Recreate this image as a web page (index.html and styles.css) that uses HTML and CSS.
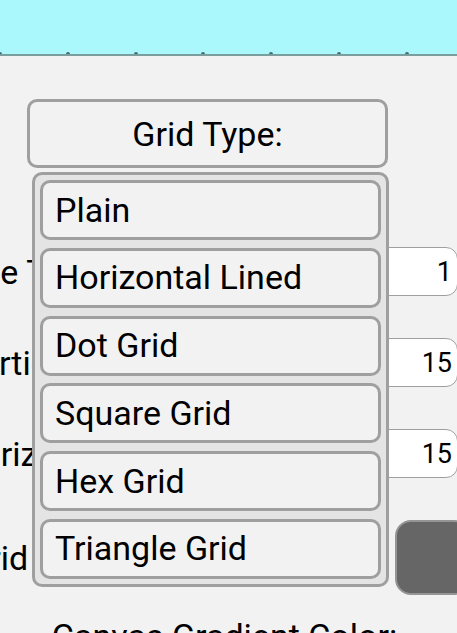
FILE: index.html
```html
<!DOCTYPE html>
<html lang="en">
<head>
<meta charset="utf-8">
<title>Grid Settings</title>
<link rel="stylesheet" href="styles.css">
</head>
<body>
<div class="topbar">
  <div class="ticks">
    <span class="tick"></span><span class="tick"></span><span class="tick"></span><span class="tick"></span><span class="tick"></span><span class="tick"></span><span class="tick"></span>
  </div>
</div>
<main class="main">
  <div class="select-wrap">
    <div class="select-btn">Grid Type:</div>
    <ul class="dropdown">
      <li class="item">Plain</li>
      <li class="item">Horizontal Lined</li>
      <li class="item">Dot Grid</li>
      <li class="item">Square Grid</li>
      <li class="item">Hex Grid</li>
      <li class="item">Triangle Grid</li>
    </ul>
  </div>
  <div class="settings">
    <div class="row">
      <span class="label label-thickness">Line Thickness:</span>
      <span class="input">1</span>
    </div>
    <div class="row">
      <span class="label label-vertical">Vertical Spacing:</span>
      <span class="input">15</span>
    </div>
    <div class="row">
      <span class="label label-horizontal">Horizontal Spacing:</span>
      <span class="input">15</span>
    </div>
    <div class="row row-color">
      <span class="label label-color">Grid Color:</span>
      <span class="swatch"></span>
    </div>
  </div>
  <div class="section-title">Canvas Gradient Color:</div>
</main>
</body>
</html>
```
FILE: styles.css
```css
* { box-sizing: border-box; }
html, body { margin: 0; padding: 0; }
body {
  width: 457px;
  height: 633px;
  overflow: hidden;
  background: #f2f2f2;
  font-family: Roboto, "Noto Sans", sans-serif;
  color: #000;
}
.topbar {
  height: 56px;
  background: #aaf8fc;
  border-bottom: 2px solid #7a9d9e;
  display: flex;
  align-items: flex-end;
}
.ticks {
  display: flex;
  gap: 63.8px;
  margin-left: -2px;
}
.tick {
  width: 4px;
  height: 2px;
  background: #4d6b6c;
  border-radius: 2px 2px 0 0;
  flex: none;
}
.main {
  padding-top: 43px;
}
.select-wrap {
  position: relative;
  margin-left: 27px;
  width: 361px;
}
.select-btn {
  height: 69px;
  border: 3px solid #9f9f9f;
  border-radius: 10px;
  display: flex;
  align-items: center;
  justify-content: center;
  font-size: 34px;
}
.dropdown {
  position: absolute;
  left: 5px;
  top: 73px;
  width: 357px;
  margin: 0;
  padding: 5px;
  list-style: none;
  background: #e4e4e4;
  border: 3px solid #9f9f9f;
  border-radius: 10px;
  display: flex;
  flex-direction: column;
  gap: 7.75px;
  z-index: 2;
}
.item {
  height: 60px;
  border: 3px solid #9f9f9f;
  border-radius: 10px;
  background: #f2f2f2;
  padding-left: 12px;
  padding-bottom: 1px;
  display: flex;
  align-items: center;
  font-size: 34px;
  white-space: nowrap;
}
.settings {
  margin-top: 79px;
  display: flex;
  flex-direction: column;
  gap: 42px;
}
.row {
  display: flex;
  align-items: center;
  height: 49px;
}
.row-color {
  height: 75px;
}
.label {
  flex: 0 0 400px;
  overflow: hidden;
  white-space: nowrap;
  font-size: 34px;
}
.label-thickness { margin-left: -45px; flex-basis: 420px; }
.label-vertical { margin-left: -40px; flex-basis: 415px; }
.label-horizontal { margin-left: -43px; flex-basis: 418px; }
.label-color { margin-left: -34px; flex-basis: 422px; }
.input {
  flex: none;
  width: 83px;
  height: 49px;
  background: #fff;
  border: 1.5px solid #9f9f9f;
  border-radius: 12px;
  display: flex;
  align-items: center;
  justify-content: flex-end;
  padding-right: 5px;
  font-size: 27px;
}
.swatch {
  flex: none;
  margin-left: 7px;
  width: 75px;
  height: 75px;
  background: #666666;
  border: 2px solid #959595;
  border-radius: 16px;
}
.section-title {
  margin-top: 21px;
  margin-left: -8px;
  text-align: center;
  font-size: 34px;
}
```
